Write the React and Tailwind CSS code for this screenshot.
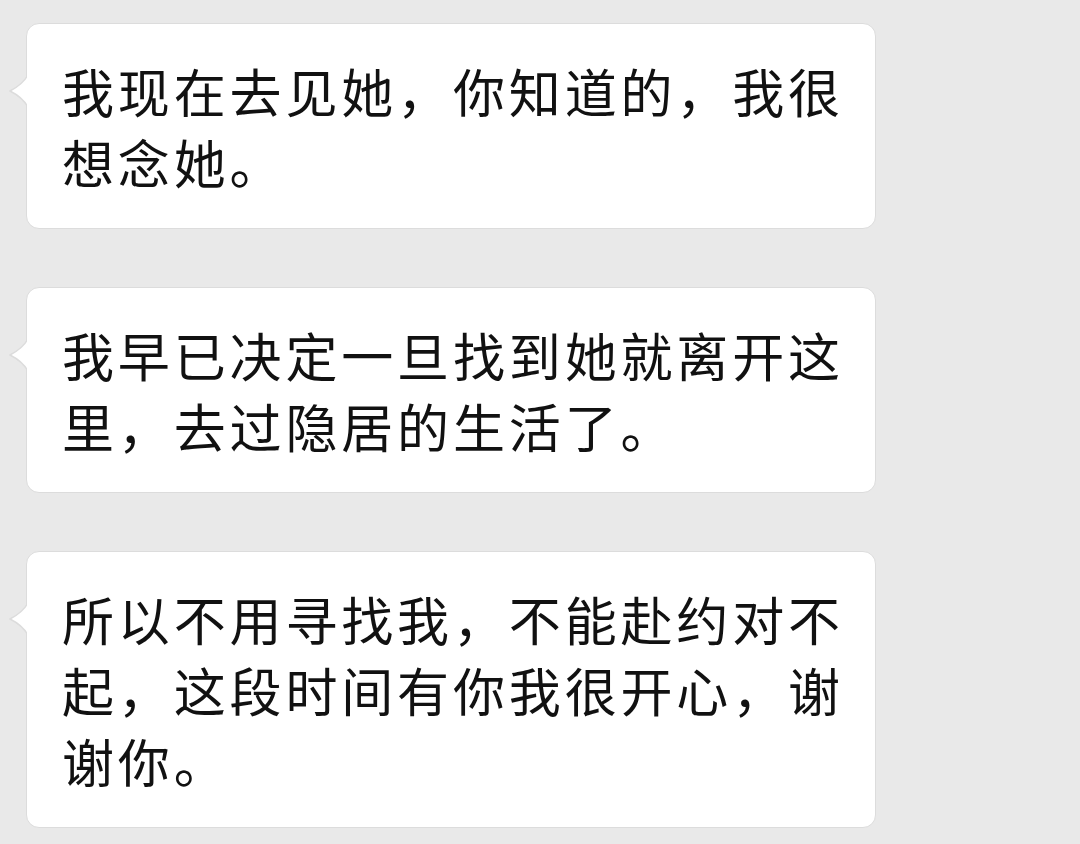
import React from "react";

const messages = [
  ["我现在去见她，你知道的，我很", "想念她。"],
  ["我早已决定一旦找到她就离开这", "里，去过隐居的生活了。"],
  ["所以不用寻找我，不能赴约对不", "起，这段时间有你我很开心，谢", "谢你。"],
];

function Tail() {
  // little pointer on the left side of an incoming bubble
  return (
    <svg
      className="absolute left-[-18px] top-[49px]"
      width="20"
      height="36"
      viewBox="0 0 20 36"
    >
      <path d="M19 2 C15 9 9 14 1 18 C9 22 15 27 19 34 Z" fill="#ffffff" />
      <path
        d="M19 2 C15 9 9 14 1 18 C9 22 15 27 19 34"
        fill="none"
        stroke="#dcdcdc"
        strokeWidth="1.5"
      />
      <rect x="18" y="0" width="2" height="36" fill="#ffffff" />
    </svg>
  );
}

function Bubble({ lines }) {
  return (
    <div className="relative w-[850px] rounded-[13px] border border-[#dcdcdc] bg-white pl-[35px] pr-[30px] py-[31px]">
      <Tail />
      <div
        className="text-[52px] leading-[71px] tracking-[3.85px] text-[#111111]"
        style={{ fontFamily: '"Noto Sans CJK SC", "Noto Sans", sans-serif' }}
      >
        {lines.map((l, i) => (
          <div key={i} className="whitespace-nowrap">
            {l}
          </div>
        ))}
      </div>
    </div>
  );
}

export default function App() {
  return (
    <div className="flex h-[844px] w-[1080px] flex-col gap-[58px] overflow-hidden bg-[#e9e9e9] pl-[26px] pt-[23px]">
      {messages.map((m, i) => (
        <Bubble key={i} lines={m} />
      ))}
    </div>
  );
}
